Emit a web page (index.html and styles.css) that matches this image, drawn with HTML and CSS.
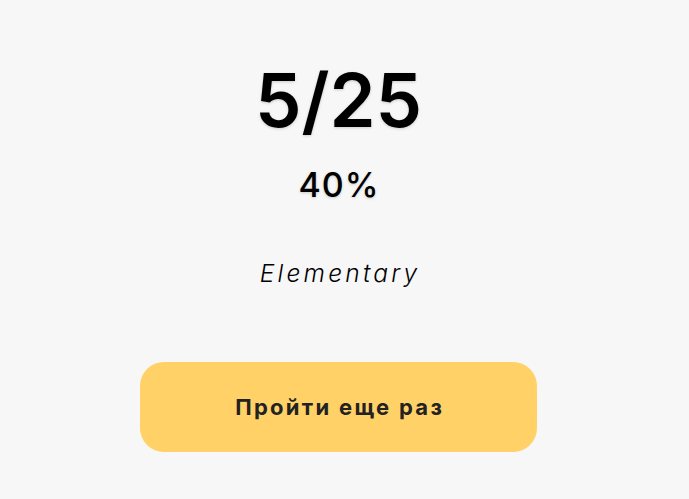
FILE: index.html
```html
<!DOCTYPE html>
<html lang="ru">
<head>
<meta charset="utf-8">
<link rel="stylesheet" href="styles.css">
</head>
<body>
<main class="result">
  <div class="score">5/25</div>
  <div class="percent">40%</div>
  <div class="level">Elementary</div>
  <button class="retry">Пройти еще раз</button>
</main>
</body>
</html>
```
FILE: styles.css
```css
html, body {
  margin: 0;
  padding: 0;
  background: #f7f7f7;
}
body {
  font-family: Inter, "Open Sans", sans-serif;
  color: #000;
}
.result {
  display: flex;
  flex-direction: column;
  align-items: center;
  padding: 50px 12px 0 0;
}
.score {
  font-size: 74px;
  font-weight: 600;
  line-height: 100px;
  text-shadow: 0 1px 3px rgba(0,0,0,0.18);
}
.percent {
  font-size: 34px;
  font-weight: 500;
  line-height: 50px;
  letter-spacing: 1px;
  padding-left: 1px;
  margin-top: 10px;
  text-shadow: 0 1px 3px rgba(0,0,0,0.18);
}
.level {
  font-size: 24.5px;
  font-weight: 300;
  font-style: italic;
  line-height: 34px;
  letter-spacing: 3.2px;
  padding-left: 3.2px;
  margin-top: 46px;
}
.retry {
  margin-top: 72px;
  width: 397px;
  height: 90px;
  border: none;
  border-radius: 24px;
  background: #ffd166;
  color: #222;
  font-family: inherit;
  font-size: 22px;
  font-weight: 700;
  letter-spacing: 2.3px;
  padding: 0 0 0 2.3px;
  cursor: pointer;
}
```
